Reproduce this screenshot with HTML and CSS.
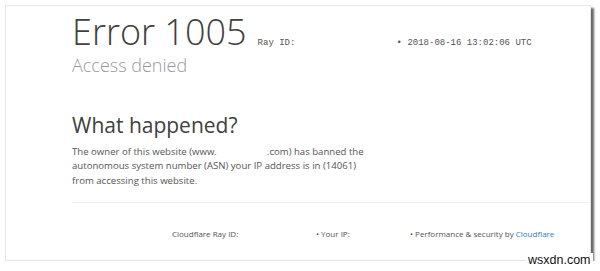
FILE: index.html
```html
<!DOCTYPE html>
<html>
<head>
    <title>Error 1005 - Access denied</title>
    <link rel="stylesheet" href="styles.css">
</head>
<body>
    <div class="frame">
        <div class="header">
            <h1>Error 1005</h1>
            <span class="ray-id">Ray ID:</span>
            <span class="ray-time">&bull; 2018-08-16 13:02:06 UTC</span>
        </div>
        <h2 class="subtitle">Access denied</h2>

        <div class="section">
            <h2>What happened?</h2>
            <p>The owner of this website (www.<span class="blank"></span>.com) has banned the autonomous system number (ASN) your IP address is in (14061) from accessing this website.</p>
        </div>

        <div class="footer">
            <span class="footer-ray">Cloudflare Ray ID:</span>
            <span class="footer-ip">&bull; Your IP:</span>
            <span class="footer-perf">&bull; Performance &amp; security by <a href="#">Cloudflare</a></span>
        </div>
    </div>
    <div class="watermark">wsxdn.com</div>
</body>
</html>
```

FILE: styles.css
```css
body {
    margin: 0;
    background: #fff;
    font-family: "Open Sans", Arial, sans-serif;
    color: #404040;
}
.frame {
    margin: 5px 0 0 5px;
    width: 586px;
    height: 256px;
    border: 1px solid #e6e6e6;
    box-shadow: 3px 3px 2px rgba(0,0,0,0.6);
    background: #fff;
    padding-top: 5.5px;
    box-sizing: border-box;
}
.header {
    display: flex;
    align-items: baseline;
    padding-left: 66px;
}
h1 {
    margin: 0;
    font-size: 36px;
    line-height: 40px;
    font-weight: 300;
    color: #404040;
}
.ray-id {
    margin-left: 11px;
    width: 139px;
    font-family: "Liberation Mono", "Courier New", monospace;
    font-size: 9px;
    color: #555;
}
.ray-time {
    font-family: "Liberation Mono", "Courier New", monospace;
    font-size: 9px;
    color: #555;
}
.subtitle {
    margin: 3px 0 0 66px;
    font-size: 18px;
    line-height: 20px;
    font-weight: 300;
    color: #999;
}
.section {
    padding: 38px 0 0 66px;
}
.section h2 {
    margin: 0;
    font-size: 21px;
    line-height: 24px;
    font-weight: 400;
    color: #404040;
}
.section p {
    margin: 8px 0 0;
    width: 292px;
    font-size: 9.6px;
    line-height: 14.5px;
    color: #555;
}
.blank {
    display: inline-block;
    width: 50px;
}
.footer {
    margin: 14px 0 0 66px;
    border-top: 1px solid #efefef;
    padding: 25px 0 0 100px;
    display: flex;
    font-size: 8px;
    line-height: 11px;
    color: #555;
}
.footer-ray {
    width: 144px;
}
.footer-ip {
    width: 94px;
}
.footer a {
    color: #2f7bbf;
    text-decoration: none;
}
.watermark {
    position: absolute;
    left: 526px;
    top: 253px;
    background: #fff;
    padding: 0 2px;
    font-family: "Liberation Sans", Arial, sans-serif;
    font-size: 12.5px;
    line-height: 15px;
    color: #111;
}
```
